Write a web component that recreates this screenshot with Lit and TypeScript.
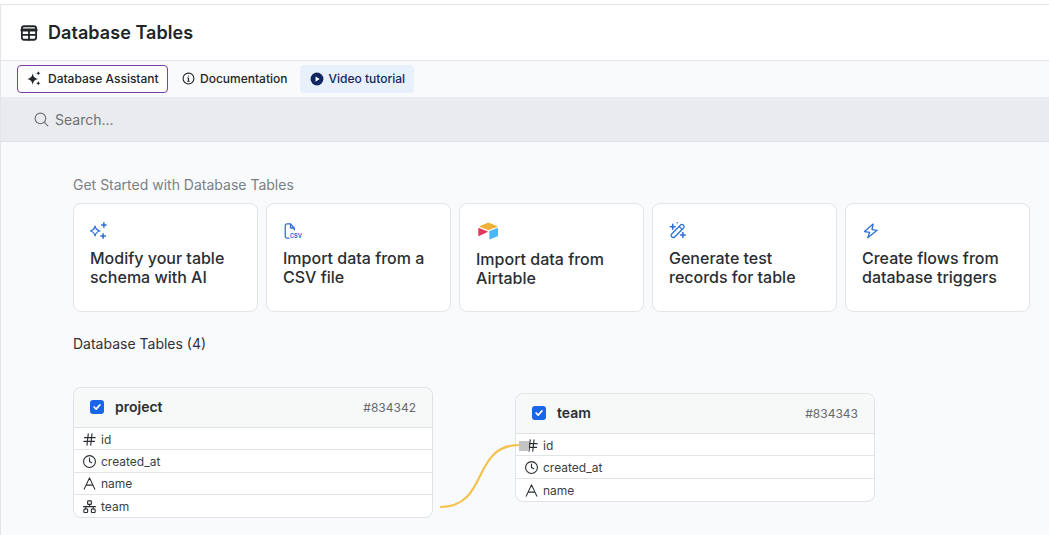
import { LitElement, html, css, svg } from "lit";
import { customElement } from "lit/decorators.js";

const ic = (size: number, body: unknown, sw = 2) => html`<svg width=${size} height=${size} viewBox="0 0 24 24" fill="none" stroke="currentColor" stroke-width=${sw} stroke-linecap="round" stroke-linejoin="round">${body}</svg>`;

const hash = svg`<path d="M10 3 8 21M16 3l-2 18M4 9h17M3 15h17"/>`;
const clock = svg`<circle cx="12" cy="12" r="9.5"/><path d="M12 6.5V12l3.5 2"/>`;
const letter = svg`<path d="M3.500 21 12 3l8.500 18M7 14.500h10"/>`;
const tree = svg`<rect x="9" y="3" width="6" height="5.500" rx="1"/><rect x="3" y="16" width="6" height="5.500" rx="1"/><rect x="15" y="16" width="6" height="5.500" rx="1"/><path d="M2.500 12.200h19M12 8.500v3.700M6 12.200V16M18 12.200V16"/>`;

const fields: Record<string, unknown> = { id: hash, created_at: clock, name: letter, team: tree };

const cards = [
  { t: ["Modify your table", "schema with AI"], i: svg`<path d="M6.700 5.500c.7 3.500 2.300 5.500 6.500 6.500-4.200 1-5.800 3-6.500 6.500C6 15 4.400 13 .500 12 4.400 11 6 9 6.700 5.500Z"/><path d="M18.500 1v6M15.500 4h6M17.500 15.500v6M14.500 18.500h6" stroke-width="2"/>`, k: "" },
  { t: ["Import data from a", "CSV file"], i: svg`<path d="M10 2.500H5.500A2.500 2.500 0 0 0 3 5v14a2.500 2.500 0 0 0 2.500 2.500H8M10 2.500l5 5.500v2.500M10 2.500V8h5"/>`, k: "csv" },
  { t: ["Import data from", "Airtable"], i: "", k: "air" },
  { t: ["Generate test", "records for table"], i: svg`<rect x="0.500" y="9.200" width="22" height="5.600" rx="2.600" transform="rotate(-45 11.500 12)"/><path d="m14 6.500 3 3"/><path d="M5 3v6.500M1.800 6.300h6.400M18.500 14v6.500M15.300 17.300h6.400M11 1v.01" stroke-width="2"/>`, k: "" },
  { t: ["Create flows from", "database triggers"], i: svg`<path d="M13.500 2.500 3.500 14h7l-1.500 7.500L20 10h-7l.500-7.500Z" transform="rotate(8 12 12)"/>`, k: "" },
];

@customElement("app-root")
export class AppRoot extends LitElement {
  static styles = css`
    :host { display: block; height: 535px; overflow: hidden; font-family: Inter, "Liberation Sans", sans-serif; color: #212529; background: #fff; }
    .shell { height: 531px; margin-top: 4px; border-top: 1px solid #e3e5e8; border-left: 1px solid #e3e5e8; box-sizing: border-box; display: flex; flex-direction: column; background: #f9fafb; overflow: hidden; }
    .head { height: 56px; flex: none; background: #fff; border-bottom: 1px solid #e3e5e8; display: flex; align-items: center; gap: 10px; padding-left: 19px; box-sizing: border-box; font-size: 18px; font-weight: 600; letter-spacing: .06px; color: #212529; }
    .head svg { display: block; }
    .bar { height: 36px; flex: none; display: flex; align-items: flex-start; padding: 4px 0 0 16px; box-sizing: border-box; background: #f9fafb; }
    .btn { height: 28px; box-sizing: border-box; display: flex; align-items: center; font-size: 12px; font-weight: 500; border-radius: 4px; color: #212529; white-space: nowrap; padding-bottom: 1px; }
    .ai { border: 1px solid #7b3fa6; background: #fff; width: 151px; padding-left: 9px; gap: 5px; margin-right: 6px; }
    .doc { padding-left: 8px; padding-right: 6px; gap: 5px; margin-right: 6px; }
    .vid { background: #e8f0fc; color: #10285f; padding-left: 10px; padding-right: 9px; gap: 5px; }
    .search { height: 45px; flex: none; background: #e9ebee; border-bottom: 1px solid #dfe2e6; box-sizing: border-box; display: flex; align-items: center; gap: 5px; padding-left: 32px; color: #6b7178; font-size: 14px; }
    .main { flex: 1; position: relative; padding: 34px 0 0 72px; }
    .sub { font-size: 14px; line-height: 17px; color: #7a7f85; }
    .cards { display: flex; align-items: flex-start; gap: 8px; margin-top: 10px; }
    .card { width: 185px; height: 109px; box-sizing: border-box; flex: none; background: #fff; border: 1px solid #e1e4e8; border-radius: 8px; padding: 17px 16px 0; color: #2b6fd8; }
    .card .ico { height: 20px; display: flex; align-items: center; position: relative; }
    .card .big { height: 21px; }
    .card .txt { margin-top: 8px; color: #2a2e33; font-size: 16px; font-weight: 500; line-height: 19px; }
    .csv { position: absolute; left: 7px; top: 12px; font-size: 5.500px; font-weight: 700; line-height: 6px; color: #2b6fd8; letter-spacing: 0; }
    .tt { font-size: 14px; font-weight: 400; line-height: 17px; margin-top: 23px; color: #2f3338; }
    .table { position: absolute; width: 360px; box-sizing: border-box; background: #fff; border: 1px solid #dfe2e6; border-radius: 8px; overflow: hidden; }
    .t1 { left: 72px; top: 245px; }
    .t2 { left: 514px; top: 251px; }
    .thead { height: 40px; background: #f7f8f8; display: flex; align-items: center; padding: 0 16px 1px; gap: 11px; box-sizing: border-box; border-bottom: 1px solid #dfe2e6; }
    .check { width: 14px; height: 14px; border-radius: 3px; background: #1a66e8; display: flex; align-items: center; justify-content: center; color: #fff; }
    .name { font-size: 14px; font-weight: 600; flex: 1; color: #2a2e33; padding-bottom: 2px; }
    .num { font-size: 12px; color: #66696e; }
    .row { height: 22.250px; box-sizing: border-box; display: flex; align-items: center; gap: 4px; padding: 1px 0 0 8px; font-size: 12px; color: #3b3f44; border-bottom: 1px solid #e1e4e8; }
    .row:last-child { border-bottom: 0; }
    .row svg { flex: none; color: #2a2e33; }
    .wire { position: absolute; left: 0; top: 0; width: 1049px; height: 400px; pointer-events: none; overflow: visible; }
    .handle { position: absolute; left: 518px; top: 299px; width: 10px; height: 10px; background: #c4c4c4; }
  `;

  private table(name: string, num: string, rows: string[], cls: string) {
    return html`<div class="table ${cls}">
      <div class="thead">
        <span class="check"><svg width="10" height="10" viewBox="0 0 24 24" fill="none" stroke="currentColor" stroke-width="4" stroke-linecap="round" stroke-linejoin="round"><path d="m5 12 5 5 9-10"/></svg></span>
        <span class="name">${name}</span><span class="num">${num}</span>
      </div>
      ${rows.map((r) => html`<div class="row">${ic(15, fields[r], 1.8)}<span>${r}</span></div>`)}
    </div>`;
  }

  render() {
    return html`<div class="shell">
      <div class="head">
        ${ic(18, svg`<rect x="2.500" y="3" width="19" height="18" rx="3"/><path d="M2.500 8h19" stroke-width="4"/><path d="M2.500 14.500h19M12 8v13"/>`, 2.4)}
        <span>Database Tables</span>
      </div>
      <div class="bar">
        <div class="btn ai">
          <svg width="16" height="16" viewBox="0 0 24 24" fill="currentColor"><path d="M8.500 3.500c1 5.300 3 7.500 8.500 8.500-5.500 1-7.500 3.200-8.500 8.500C7.500 15.200 5.500 13 0 12c5.500-1 7.500-3.200 8.500-8.500Z"/><path d="M17 0c.5 2.300 1.300 3 3.500 3.500C18.300 4 17.500 4.700 17 7c-.5-2.300-1.300-3-3.500-3.500C15.700 3 16.500 2.300 17 0ZM17 15c.5 2.300 1.300 3 3.500 3.500-2.200.5-3 1.200-3.500 3.500-.5-2.300-1.300-3-3.500-3.500 2.200-.5 3-1.200 3.500-3.500Z"/></svg>
          Database Assistant
        </div>
        <div class="btn doc">${ic(13, svg`<circle cx="12" cy="12" r="10"/><path d="M12 11v6M12 7.500v.01M10.500 11H12M10.500 17h3"/>`, 2)} Documentation</div>
        <div class="btn vid"><svg width="14" height="14" viewBox="0 0 24 24"><circle cx="12" cy="12" r="11" fill="#10285f"/><path d="M9.500 7.500v9l7-4.500Z" fill="#fff"/></svg> Video tutorial</div>
      </div>
      <div class="search">${ic(17, svg`<circle cx="10.500" cy="10.500" r="7.500"/><path d="m21 21-5.200-5.200"/>`, 1.6)}<span>Search...</span></div>
      <div class="main">
        <div class="sub">Get Started with Database Tables</div>
        <div class="cards">
          ${cards.map((c) => html`<div class="card">
            <div class="ico ${c.k === "air" ? "big" : ""}">
              ${c.k === "air"
                ? html`<svg width="22" height="19" viewBox="-1.500 0 22 19"><path d="M9.800 1 2.500 4c-.4.2-.4.7 0 .9l7.400 2.900c.7.3 1.500.3 2.200 0l7.400-2.900c.4-.2.400-.7 0-.9L12.100 1c-.7-.3-1.600-.3-2.300 0Z" fill="#f0b13a"/><path d="M11.800 9.600v7.200c0 .3.400.6.700.4l7.800-3c.2-.1.300-.3.300-.5V6.500c0-.4-.4-.6-.7-.5l-7.800 3.100c-.2.100-.3.300-.3.500Z" fill="#4db8f7"/><path d="M10 9.900 1.600 14c-.4.200-.8-.1-.8-.500V6.500c0-.2.100-.3.200-.4.100-.1.300-.1.400-.1l8.500 3.300c.4.200.4.500.1.600Z" fill="#e0395a"/></svg>`
                : ic(18, c.i, 1.7)}
              ${c.k === "csv" ? html`<span class="csv">CSV</span>` : ""}
            </div>
            <div class="txt">${c.t[0]}<br />${c.t[1]}</div>
          </div>`)}
        </div>
        <div class="tt">Database Tables (4)</div>
        ${this.table("project", "#834342", ["id", "created_at", "name", "team"], "t1")}
        ${this.table("team", "#834343", ["id", "created_at", "name"], "t2")}
        <svg class="wire"><path d="M439 365C489 365 469 303 519 303" fill="none" stroke="#f5c250" stroke-width="2.200"/></svg>
        <div class="handle"></div>
      </div>
    </div>`;
  }
}
